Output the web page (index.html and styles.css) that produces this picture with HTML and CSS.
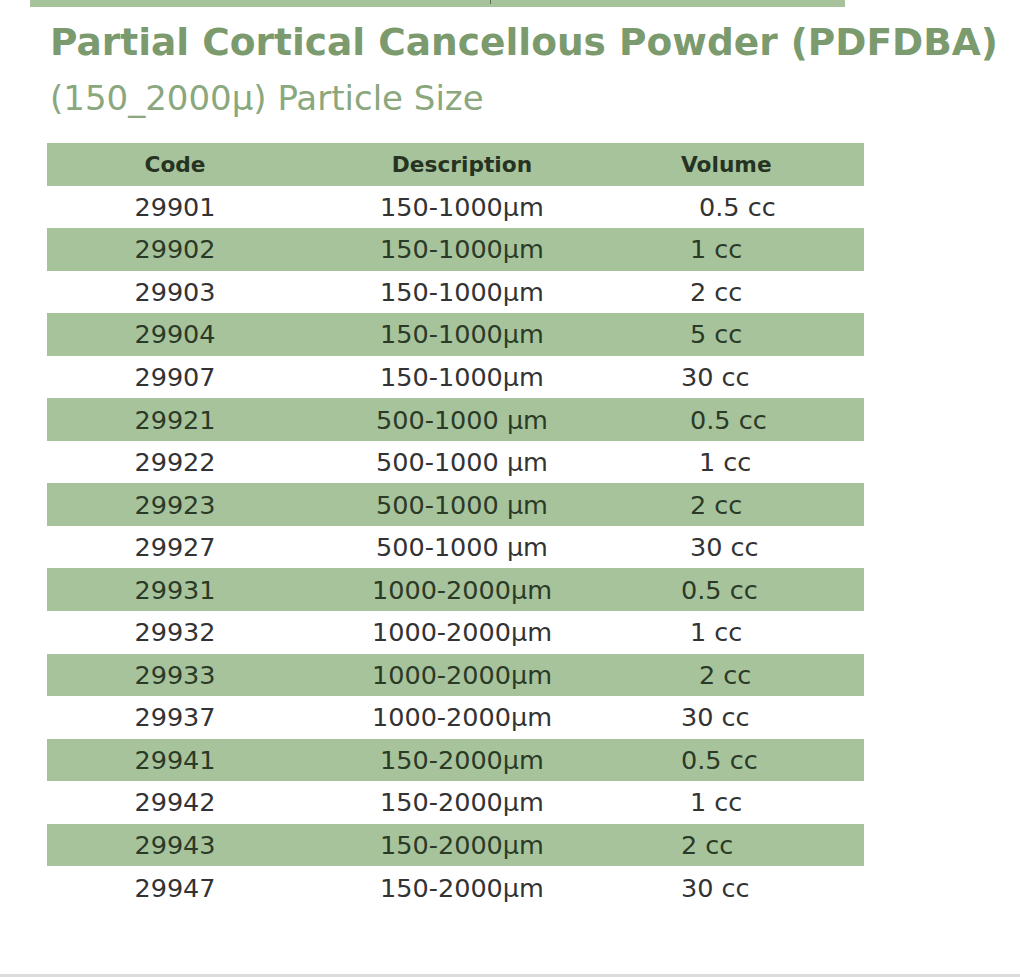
FILE: index.html
```html
<!DOCTYPE html>
<html lang="en">
<head>
<meta charset="utf-8">
<title>Partial Cortical Cancellous Powder (PDFDBA)</title>
<link rel="stylesheet" href="styles.css">
</head>
<body>
<div class="page">
  <div class="topbar"><span class="tick"></span></div>
  <h1 class="title">Partial Cortical Cancellous Powder (PDFDBA)</h1>
  <h2 class="subtitle">(150_2000µ) Particle Size</h2>
  <div class="table">
    <div class="row head"><div class="c-code">Code</div><div class="c-desc">Description</div><div class="c-vol v0">Volume</div></div>
    <div class="row"><div class="c-code">29901</div><div class="c-desc">150-1000µm</div><div class="c-vol v2">0.5 cc</div></div>
    <div class="row alt"><div class="c-code">29902</div><div class="c-desc">150-1000µm</div><div class="c-vol v1">1 cc</div></div>
    <div class="row"><div class="c-code">29903</div><div class="c-desc">150-1000µm</div><div class="c-vol v1">2 cc</div></div>
    <div class="row alt"><div class="c-code">29904</div><div class="c-desc">150-1000µm</div><div class="c-vol v1">5 cc</div></div>
    <div class="row"><div class="c-code">29907</div><div class="c-desc">150-1000µm</div><div class="c-vol v0">30 cc</div></div>
    <div class="row alt"><div class="c-code">29921</div><div class="c-desc">500-1000 µm</div><div class="c-vol v1">0.5 cc</div></div>
    <div class="row"><div class="c-code">29922</div><div class="c-desc">500-1000 µm</div><div class="c-vol v2">1 cc</div></div>
    <div class="row alt"><div class="c-code">29923</div><div class="c-desc">500-1000 µm</div><div class="c-vol v1">2 cc</div></div>
    <div class="row"><div class="c-code">29927</div><div class="c-desc">500-1000 µm</div><div class="c-vol v1">30 cc</div></div>
    <div class="row alt"><div class="c-code">29931</div><div class="c-desc">1000-2000µm</div><div class="c-vol v0">0.5 cc</div></div>
    <div class="row"><div class="c-code">29932</div><div class="c-desc">1000-2000µm</div><div class="c-vol v1">1 cc</div></div>
    <div class="row alt"><div class="c-code">29933</div><div class="c-desc">1000-2000µm</div><div class="c-vol v2">2 cc</div></div>
    <div class="row"><div class="c-code">29937</div><div class="c-desc">1000-2000µm</div><div class="c-vol v0">30 cc</div></div>
    <div class="row alt"><div class="c-code">29941</div><div class="c-desc">150-2000µm</div><div class="c-vol v0">0.5 cc</div></div>
    <div class="row"><div class="c-code">29942</div><div class="c-desc">150-2000µm</div><div class="c-vol v1">1 cc</div></div>
    <div class="row alt"><div class="c-code">29943</div><div class="c-desc">150-2000µm</div><div class="c-vol v0">2 cc</div></div>
    <div class="row"><div class="c-code">29947</div><div class="c-desc">150-2000µm</div><div class="c-vol v0">30 cc</div></div>
  </div>
</div>
<div class="bottomline"></div>
</body>
</html>
```
FILE: styles.css
```css
html, body {
  margin: 0;
  padding: 0;
  background: #ffffff;
}
body {
  font-family: "DejaVu Sans", Verdana, sans-serif;
  color: #333333;
  width: 1020px;
  height: 977px;
  position: relative;
  overflow: hidden;
}
.page {
  height: 974px;
}
.topbar {
  margin-left: 30px;
  width: 815px;
  height: 7px;
  background: #a7c39c;
  position: relative;
}
.tick {
  position: absolute;
  left: 460px;
  top: 0;
  width: 1px;
  height: 4px;
  background: #5d6b57;
}
.title {
  margin: 13px 0 0 50px;
  font-size: 37.5px;
  line-height: 44px;
  font-weight: bold;
  color: #7b9a6d;
  white-space: nowrap;
}
.subtitle {
  margin: 14px 0 0 50px;
  font-size: 34px;
  line-height: 40px;
  font-weight: normal;
  color: #8aa77d;
  white-space: nowrap;
}
.table {
  margin: 25px 0 0 47px;
  width: 817px;
}
.row {
  display: grid;
  grid-template-columns: 256px 318px 243px;
  height: 42.55px;
  align-items: center;
  font-size: 25.5px;
  color: #333333;
}
.row.alt,
.row.head {
  background: #a7c39c;
  color: #2b3a27;
}
.row.head {
  font-size: 21.7px;
  font-weight: bold;
  color: #263322;
}
.c-code,
.c-desc {
  text-align: center;
  white-space: nowrap;
}
.c-vol {
  white-space: nowrap;
}
.v0 { padding-left: 60px; }
.v1 { padding-left: 69px; }
.v2 { padding-left: 78px; }
.bottomline {
  position: absolute;
  left: 0;
  right: 0;
  bottom: 0;
  height: 3px;
  background: #dcdcdc;
}
```
